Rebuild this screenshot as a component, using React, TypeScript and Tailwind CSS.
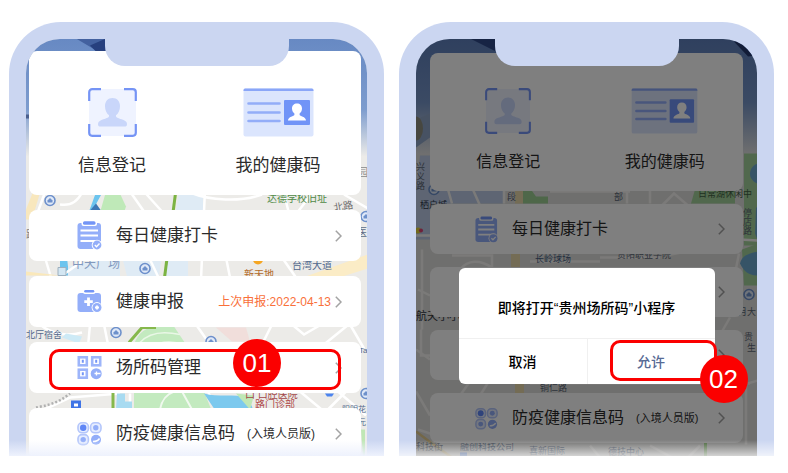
import type { ReactNode } from 'react'
import clsx from 'clsx'

type Size = 'lg' | 'md'

function FaceFrameIcon({ className }: { className?: string }) {
  return (
    <svg viewBox="0 0 49 49" className={className} aria-hidden="true">
      <rect x="1" y="1" width="47" height="47" rx="3" fill="#eff3ff" />
      <path
        d="M1.2 13V4.2a3 3 0 0 1 3-3H13M36 1.2h8.800a3 3 0 0 1 3 3V13M47.800 36v8.800a3 3 0 0 1-3 3H36M13 47.800H4.200a3 3 0 0 1-3-3V36"
        fill="none"
        stroke="#7594f5"
        strokeWidth="2.2"
      />
      <path
        d="M24.500 10c4.600 0 7.500 3.400 7.500 8.200 0 4-1.600 7.300-4 9v1c0 1.500 3.500 2.200 7 3.600 3 1.200 4 2.400 4 4.400 0 1.600-.8 2.300-2.300 2.300H12.300c-1.500 0-2.300-.7-2.300-2.300 0-2 1-3.200 4-4.400 3.500-1.400 7-2.100 7-3.600v-1c-2.400-1.700-4-5-4-9 0-4.800 2.900-8.200 7.500-8.200z"
        fill="#c9d6fa"
      />
    </svg>
  )
}

function IdCardIcon({ className }: { className?: string }) {
  return (
    <svg viewBox="0 0 71 49" className={className} aria-hidden="true">
      <rect x="0.500" y="0.500" width="70" height="48" rx="2" fill="#dbe5fd" />
      <path d="M0.500 3V2a1.500 1.500 0 0 1 1.500-1.500h67A1.500 1.500 0 0 1 70.500 2v1z" fill="#8aa6f8" />
      <path d="M5.500 15.500h31M5.500 24.500h31M5.500 33h31" stroke="#93adf8" strokeWidth="2.600" strokeLinecap="round" />
      <rect x="41" y="12" width="26" height="25" rx="1" fill="#7194f7" />
      <path
        d="M54 15.500c3 0 5 2 5 5 0 2.200-1 4-2.400 5v1.500c0 1 6.400 1.600 6.400 5.500H45c0-3.900 6.400-4.500 6.400-5.500v-1.500c-1.400-1-2.400-2.800-2.400-5 0-3 2-5 5-5z"
        fill="#fff"
      />
    </svg>
  )
}

function ClipboardIcon({ className }: { className?: string }) {
  return (
    <svg viewBox="0 0 25 29" className={className} aria-hidden="true">
      <rect x="0.500" y="2" width="23.500" height="26" rx="3" fill="#93aef9" />
      <rect x="4.500" y="0" width="15.500" height="5" rx="2" fill="#fff" />
      <rect x="6" y="0.300" width="12.500" height="3.400" rx="1.500" fill="#7395f6" />
      <path d="M3.500 9.500h17.500M3.500 14.500h17.500M3.500 20h17.500" stroke="#fff" strokeWidth="2" />
      <circle cx="20" cy="24" r="5.300" fill="#fff" />
      <circle cx="20" cy="24" r="4.400" fill="#93aef9" />
      <path d="M17.800 24l1.700 1.700 3-3.200" fill="none" stroke="#fff" strokeWidth="1.400" />
    </svg>
  )
}

function MedkitIcon({ className }: { className?: string }) {
  return (
    <svg viewBox="0 0 25 29" className={className} aria-hidden="true">
      <rect x="0.500" y="6" width="23.500" height="19" rx="3" fill="#93aef9" />
      <rect x="6" y="2.500" width="12.500" height="4.500" rx="2" fill="#fff" />
      <path d="M8.500 4.300h7.500" stroke="#7395f6" strokeWidth="2.600" strokeLinecap="round" />
      <path d="M11.500 10.500v8.500M7.300 14.700h8.500" stroke="#fff" strokeWidth="2.800" />
      <circle cx="20" cy="20.500" r="5.400" fill="#fff" />
      <circle cx="20" cy="20.500" r="4.500" fill="#93aef9" />
      <path d="M20 18.500v4M18 20.500h4" stroke="#fff" strokeWidth="1.800" />
    </svg>
  )
}

function VenueCodeIcon({ className }: { className?: string }) {
  return (
    <svg viewBox="0 0 25 29" className={className} aria-hidden="true">
      <g fill="#fff" stroke="#9db5fa" strokeWidth="2.600">
        <rect x="1.800" y="4.300" width="8" height="8" />
        <rect x="15.200" y="4.300" width="8" height="8" />
        <rect x="1.800" y="16.700" width="8" height="8" />
      </g>
      <path d="M5.800 6.800v3M19.200 6.800v3M5.800 19.200v3" stroke="#7395f6" strokeWidth="2" />
      <circle cx="19.200" cy="20.700" r="5.500" fill="#93aef9" />
      <path d="M17.500 20.500h6M19.500 18.500v4" stroke="#fff" strokeWidth="1.300" />
    </svg>
  )
}

function PreventionCodeIcon({ className }: { className?: string }) {
  return (
    <svg viewBox="0 0 25 29" className={className} aria-hidden="true">
      <g fill="#e6edff" stroke="#b4c6fb" strokeWidth="1.600">
        <rect x="1" y="3.800" width="10.400" height="10" rx="4" />
        <rect x="13.600" y="3.800" width="10.400" height="10" rx="4" />
        <rect x="1" y="15.600" width="10.400" height="10" rx="4" />
      </g>
      <circle cx="6.200" cy="8.800" r="3.200" fill="#5f86f6" />
      <circle cx="18.800" cy="8.800" r="2.700" fill="#93aef9" />
      <circle cx="6.200" cy="20.600" r="2.700" fill="#93aef9" />
      <circle cx="19" cy="20.800" r="5" fill="#93aef9" />
      <path d="M16 22.500c3 0 5-.5 6.500-3" fill="none" stroke="#fff" strokeWidth="1.500" />
    </svg>
  )
}

function Chevron() {
  return (
    <svg viewBox="0 0 7 12" className="h-3 w-[7px] shrink-0" aria-hidden="true">
      <path d="M0.800 0.800L6 6l-5.200 5.200" fill="none" stroke="#a3a3a3" strokeWidth="1.500" />
    </svg>
  )
}

function MapPin({ x, y }: { x: number; y: number }) {
  return (
    <g>
      <circle cx={x} cy={y} r="5" fill="#dfe8f7" stroke="#6d90cb" strokeWidth="1.600" />
      <path d={`M${x - 2.5} ${y + 2}v-2l2.500-2.500 2.500 2.500v2z`} fill="#6d90cb" />
    </g>
  )
}

function StreetMap() {
  return (
    <svg viewBox="26 39 341 418" preserveAspectRatio="xMidYMid slice" className="absolute inset-0 h-full w-full" aria-hidden="true">
      <defs>
        <linearGradient id="sky-a" x1="0" y1="0" x2="0" y2="1">
          <stop offset="0" stopColor="#6789c3" />
          <stop offset="0.600" stopColor="#7d9cce" />
          <stop offset="1" stopColor="#ecebe8" />
        </linearGradient>
      </defs>
      <rect x="26" y="39" width="341" height="418" fill="#ecebe8" />
      <rect x="26" y="39" width="341" height="118" fill="url(#sky-a)" />
      <path d="M76 39h30v13h-8z" fill="#43619f" />
      <path d="M90 46l16-7v13h-10z" fill="#27407e" />
      <path d="M26 115h4v4h-4z" fill="#4a5f8d" />

      <path d="M34 190h7l-9 30h-6v-10z" fill="#f8e7bd" />
      <path d="M97 190h7l-12 22h-3zM60 258h7l2 18h-9z" fill="#6cc4ee" />
      <path d="M90 211l6-7 5 7z" fill="#3d78b5" />
      <path d="M106 192h13l7 15-2 6h-24z" fill="#bfe9b8" />
      <path d="M179 193h24v18h-27zM96 261h24v16H68v-10zM123 261h38l-2 16h-32zM168 261h20v16h-22z" fill="#dfebf5" />
      <path d="M176 190l-12 92" stroke="#7cb342" strokeWidth="3" />
      <g fill="none" stroke="#fff" strokeWidth="2.500">
        <path d="M46 190l-8 22M60 205c12 2 18-4 22-12M130 192l14 20M144 192l18 20M190 193c20 8 50 10 72 2M205 190l-4 90M283 190l6 24M315 190l-20 26M226 258l4 20M282 258l14 20M344 195l24 14" />
        <path d="M45 258l6 20M62 276l20-14M150 260l8 17" />
        <path d="M40 325c12 10 28 12 42 8M90 325l-2 22M104 325l4 20M196 325l14 20M272 325l-10 20M292 325l12 10 24-14M324 345l32-26M350 325l14 24" />
        <path d="M40 412l30-14 50-4M130 394v18M208 392l8 18M300 392l24 20M346 392l-20 20M338 392l28 24" />
      </g>
      <path d="M26 272l34 4H26z" fill="#fae8ba" />
      <path d="M300 279l68-24v14l-32 10z" fill="#fbecc6" />
      <path d="M58 268h8v8h-8z" fill="#d3e6f2" stroke="#9eb0bf" />

      <path d="M66 334l16 3-3 7-17-6z" fill="#cdeaf6" />
      <path d="M134 345c4-12 12-18 26-18h14l12 18z" fill="#c3eabf" />
      <path d="M140 343c8-9 22-12 40-8M150 347c12-6 22-6 34-2" fill="none" stroke="#e9f7e6" strokeWidth="1.500" />
      <path d="M129 343l13-15h14" fill="none" stroke="#86b84c" strokeWidth="3" />
      <path d="M216 328h30l4 14h-18z" fill="#f1dedb" />

      <path d="M113 392v18" stroke="#86b84c" strokeWidth="3" />
      <path d="M117 394h8v8h7v8h-16z" fill="#a8dbf1" />
      <path d="M134 392h70l8 20h-78z" fill="#c3eabf" />
      <path d="M160 410c2-10 6-15 14-18M182 392l10 18" fill="none" stroke="#f1f9ef" strokeWidth="2" />
      <path d="M204 394c14 4 30 0 44 4l6 14h-38z" fill="#7cc9ee" />
      <path d="M236 394l18 2-4 14z" fill="#bfe7b5" />
      <path d="M36 408c10-2 22-4 34-14" fill="none" stroke="#b0b0b0" strokeWidth="2.500" strokeDasharray="2 2" />
      <rect x="71" y="401" width="10" height="9" fill="#3f74e6" />
      <path d="M74 404h4v3h-4z" fill="#fff" />
      <path d="M325 394h9l-2 3h-5z" fill="#4b83ee" />
      <path d="M361 430h4v27h-2z" fill="#bfe7b5" />

      <MapPin x={50} y={201} />
      <MapPin x={145} y={269} />
      <MapPin x={116} y={333} />
      <MapPin x={211} y={342} />
      <MapPin x={366} y={217} />
      <MapPin x={366} y={394} />
      <circle cx="258" cy="260" r="5" fill="#f5a623" />
      <g fontSize="10">
        <text x="267" y="202" fill="#4f8a46">达德学校旧址</text>
        <text x="334" y="212" fill="#6c6c6c" transform="rotate(-10 334 212)">北路</text>
        <text x="358" y="176" fill="#8a8a8a">园</text>
        <text x="357" y="236" fill="#5d6b85">医</text>
        <text x="26" y="238" fill="#7d7d7d">路</text>
        <text x="72" y="268" fontSize="12" fill="#8298bd">中天广场</text>
        <text x="244" y="278" fill="#b26a2b">新天地</text>
        <text x="292" y="269" fill="#52688c">台湾大道</text>
        <text x="26" y="338" fontSize="9" fill="#52688c">北厅宿舍</text>
        <text x="359" y="353" fontSize="8" fill="#52688c">Ta</text>
        <text x="245" y="398" fill="#a24646">口 口腔医院</text>
        <text x="255" y="408" fill="#b04b4b">路门诊部</text>
        <text x="342" y="412" fontSize="8" fill="#52688c">阳明花</text>
        <text x="358" y="425" fontSize="8" fill="#52688c">元</text>
      </g>
    </svg>
  )
}

function LakesideMap() {
  return (
    <svg viewBox="416 39 341 418" preserveAspectRatio="xMidYMid slice" className="absolute inset-0 h-full w-full" aria-hidden="true">
      <defs>
        <linearGradient id="sky-b" x1="0" y1="0" x2="0" y2="1">
          <stop offset="0" stopColor="#5f80bd" />
          <stop offset="0.550" stopColor="#7695c8" />
          <stop offset="1" stopColor="#e0e0e0" />
        </linearGradient>
      </defs>
      <rect x="416" y="39" width="341" height="418" fill="#dfdedc" />
      <rect x="416" y="39" width="341" height="116" fill="url(#sky-b)" />
      <path d="M470 39h26v13z" fill="#2e4888" />
      <path d="M734 42h24v14l-10 1z" fill="#25396f" />
      <path d="M416 120l14-6v24l-14 10z" fill="#8fa5c6" />
      <ellipse cx="416" cy="129" rx="7" ry="12" fill="#8f8f80" />

      <path d="M420 156h10v34h73v14h-73v36h-14v-50z" fill="#bccbe6" />
      <path d="M515 190h8v14h-8zM511 254h9v14h-9zM515 380h9v14h-9z" fill="#e9d9aa" />
      <path d="M523 190h8l5 7h12v7h-25z" fill="#9ccf93" />
      <path d="M695 190h40v14h-44z" fill="#a3d19a" />
      <path d="M744 154h14v92h-14z" fill="#a3d19a" />
      <path d="M758 164c-8 2-10 12-6 16 3 4 6 4 6 4zM756 208h2v34l-3-8z" fill="#6da9cf" />
      <path d="M742 250l16-6v42h-14z" fill="#a3d19a" />
      <path d="M740 264c2-8 8-10 18-12v24c-10 0-14-4-18-12z" fill="#6da9cf" />
      <g fill="none" stroke="#f6f5f2" strokeWidth="2.500">
        <path d="M448 190l4 14M472 188l8 18M504 190v14M550 192h80M627 190v14M650 190v14M662 206l12-12 14 12" />
        <path d="M452 256h40v12M460 270c8-10 20-10 32-2M530 262h70M600 258h60M666 256l30-6h44M740 240l18 1M739 254l-4 20" />
        <path d="M416 236h14M422 250v80M418 290l12 6M416 350l14 10M421 330v26h12M470 382l-10 14M490 380l-10 16M530 384h220M730 318l-8 14M744 385l14-4M746 385v60" />
        <path d="M416 392l14 24M418 430l30 10M590 446l10 12M650 446l22 12M700 446l-12 12" />
      </g>
      <path d="M416 432l16 12 20 14" fill="none" stroke="#e6ce91" strokeWidth="2.500" />
      <path d="M704 443h3v14h-3z" fill="#86c26c" />
      <circle cx="418" cy="231" r="3" fill="#e4d33a" />
      <circle cx="421" cy="231" r="2" fill="#dd4477" />
      <MapPin x={434} y={190} />
      <MapPin x={749} y={295} />
      <rect x="460" y="453" width="7" height="6" fill="#4b83ee" />
      <g fontSize="9" fill="#5b6675">
        <text x="416" y="170">兴</text>
        <text x="416" y="180">义</text>
        <text x="416" y="189">路</text>
        <text x="420" y="208" fill="#2c384c">栖户城</text>
        <text x="507" y="200">段</text>
        <text x="614" y="200">部</text>
        <text x="698" y="197" fill="#416044">日常湖休闲中</text>
        <text x="743" y="216">停</text>
        <text x="743" y="225">店</text>
        <text x="743" y="234">路</text>
        <text x="535" y="262" fill="#465c80">长岭球场</text>
        <text x="617" y="258">贵阳职业学院</text>
        <text x="416" y="320" fontSize="11" fill="#31363f">航天小小</text>
        <text x="738" y="315" fontSize="9">月大</text>
        <text x="744" y="340">贵</text>
        <text x="747" y="351">生</text>
        <text x="540" y="391">铜仁路</text>
        <text x="460" y="450" fill="#465c80">融创科技公司</text>
        <text x="529" y="454" fill="#465c80">喜新国际</text>
        <text x="608" y="455" fill="#465c80">德技中心</text>
        <text x="416" y="450">科技街</text>
      </g>
    </svg>
  )
}

function StepBadge({ className, children }: { className: string; children: ReactNode }) {
  return (
    <span
      className={clsx(
        "pointer-events-none absolute z-10 flex size-12 items-center justify-center rounded-full bg-[#fb0000] font-['Liberation_Sans',sans-serif] text-[26px] leading-none font-normal text-white",
        className,
      )}
    >
      {children}
    </span>
  )
}

function Highlight({ className }: { className: string }) {
  return <span className={clsx('pointer-events-none absolute rounded-[10px] border-3 border-[#fb0000]', className)} />
}

interface TileProps {
  icon: ReactNode
  label: string
  size: Size
}

function Tile({ icon, label, size }: TileProps) {
  return (
    <button
      className={clsx('flex flex-col items-center leading-6', size === 'lg' ? 'gap-[17px] text-[17px]' : 'gap-4 text-[16px]')}
    >
      {icon}
      {label}
    </button>
  )
}

interface MenuRowProps {
  icon: ReactNode
  label: string
  suffix?: string
  note?: string
  size: Size
  children?: ReactNode
}

function MenuRow({ icon, label, suffix, note, size, children }: MenuRowProps) {
  return (
    <li className="relative">
      <button
        className={clsx(
          'flex w-full items-center rounded-lg bg-white text-left whitespace-nowrap',
          size === 'lg' ? 'h-[51px] pr-[19px] pl-12 text-[17px]' : 'h-[50px] pr-[18px] pl-[45px] text-[16px]',
        )}
      >
        {icon}
        <span className="ml-[14px]">{label}</span>
        {suffix && <span className={clsx('ml-3', size === 'lg' ? 'text-[12px]' : 'text-[11px]')}>{suffix}</span>}
        <span className="mr-1 ml-auto text-[12px] text-[#f9703a]">{note}</span>
        <Chevron />
      </button>
      {children}
    </li>
  )
}

interface PhoneProps {
  map: ReactNode
  overlay?: ReactNode
  fade: string
  children: ReactNode
}

function Phone({ map, overlay, fade, children }: PhoneProps) {
  return (
    <section className="relative rounded-t-[52px] bg-[#cbd6f1] px-[17px] pt-[17px]">
      <div className="relative h-[417px] overflow-hidden rounded-t-[34px]">
        {map}
        <div className="relative">{children}</div>
        {overlay}
      </div>
      <div className="absolute top-4 left-1/2 h-7 w-[184px] -translate-x-1/2 rounded-b-[20px] bg-[#cbd6f1]" />
      <div className={clsx('pointer-events-none absolute inset-x-0 bottom-0 h-4 bg-linear-to-b', fade)} />
    </section>
  )
}

function ConfirmDialog() {
  return (
    <>
      <div className="absolute inset-0 bg-black/50" />
      <div
        role="dialog"
        aria-labelledby="confirm-title"
        className="absolute top-[229px] left-1/2 w-64 -translate-x-1/2 rounded-md bg-white text-center text-[14px] leading-5 font-medium text-black"
      >
        <h2 id="confirm-title" className="pt-[30px] pb-5 whitespace-nowrap">
          即将打开“贵州场所码”小程序
        </h2>
        <div className="grid grid-cols-2 border-t border-[#f0f0f0]">
          <button className="h-[45px]">取消</button>
          <div className="relative border-l border-[#f0f0f0]">
            <button className="h-[45px] w-full text-[#576b95]">允许</button>
            <Highlight className="top-px -right-0.5 bottom-[3px] left-[22px]" />
            <StepBadge className="top-4 -right-[33px]">02</StepBadge>
          </div>
        </div>
      </div>
    </>
  )
}

export default function App() {
  return (
    <main className="grid min-h-screen grid-cols-2 items-start gap-[15px] bg-white pt-[22px] pr-[14px] pl-[9px] font-['Liberation_Sans','Noto_Sans_CJK_SC',sans-serif] text-[#2b2b2b]">
      <Phone map={<StreetMap />} fade="from-[#eef2fd]/0 to-[#eef2fd]">
        <div className="flex flex-col gap-[15px] pt-3 pr-1.5 pl-[3px]">
          <div className="grid grid-cols-2 rounded-lg bg-white pt-[37px] pb-[17px]">
            <Tile size="lg" icon={<FaceFrameIcon className="size-[49px]" />} label="信息登记" />
            <Tile size="lg" icon={<IdCardIcon className="h-[49px] w-[71px]" />} label="我的健康码" />
          </div>
          <ul className="flex flex-col gap-[15px]">
            <MenuRow size="lg" icon={<ClipboardIcon className="h-[29px] w-[25px]" />} label="每日健康打卡" />
            <MenuRow size="lg" icon={<MedkitIcon className="h-[29px] w-[25px]" />} label="健康申报" note="上次申报:2022-04-13" />
            <MenuRow size="lg" icon={<VenueCodeIcon className="h-[29px] w-[25px]" />} label="场所码管理">
              <Highlight className="top-[7px] right-5 bottom-[3px] left-5" />
              <StepBadge className="-top-[3px] right-20">01</StepBadge>
            </MenuRow>
            <MenuRow size="lg" icon={<PreventionCodeIcon className="h-[29px] w-[25px]" />} label="防疫健康信息码" suffix="(入境人员版)" />
          </ul>
        </div>
      </Phone>

      <Phone map={<LakesideMap />} overlay={<ConfirmDialog />} fade="from-white/0 to-white/70">
        <div className="flex flex-col gap-[13px] px-[14px] pt-[14px]">
          <div className="grid grid-cols-2 rounded-lg bg-white pt-[35px] pb-[17px]">
            <Tile size="md" icon={<FaceFrameIcon className="size-[46px]" />} label="信息登记" />
            <Tile size="md" icon={<IdCardIcon className="h-[46px] w-[67px]" />} label="我的健康码" />
          </div>
          <ul className="flex flex-col gap-[13px]">
            <MenuRow size="md" icon={<ClipboardIcon className="h-[27px] w-[23px]" />} label="每日健康打卡" />
            <MenuRow size="md" icon={<MedkitIcon className="h-[27px] w-[23px]" />} label="" />
            <MenuRow size="md" icon={<VenueCodeIcon className="h-[27px] w-[23px]" />} label="" />
            <MenuRow size="md" icon={<PreventionCodeIcon className="h-[27px] w-[23px]" />} label="防疫健康信息码" suffix="(入境人员版)" />
          </ul>
        </div>
      </Phone>
    </main>
  )
}
